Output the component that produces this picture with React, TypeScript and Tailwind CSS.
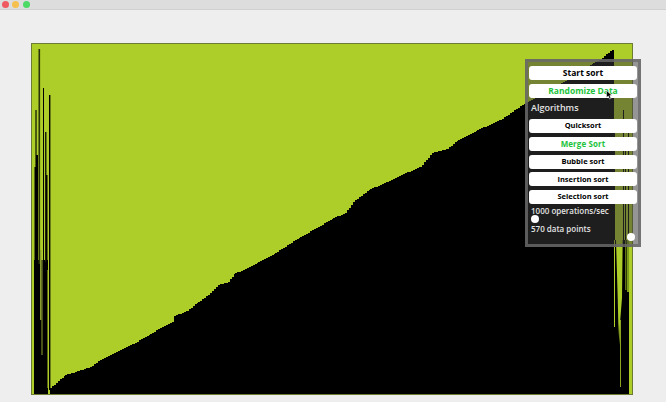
const profile = [
  [50, 388], [65, 375], [78, 371], [90, 367], [98, 361], [110, 355], [120, 350], [133, 344], [150, 334], [160, 328], [172, 322], [174, 316], [187, 311], [198, 302], [210, 293], [218, 285], [228, 282], [235, 273], [243, 270], [258, 262], [275, 253], [300, 237], [318, 227], [333, 218], [345, 213], [353, 202], [370, 189], [387, 182], [403, 174], [420, 167], [432, 153], [447, 149], [458, 140], [477, 130], [500, 120], [525, 103], [545, 92], [563, 82], [580, 71], [593, 63], [600, 60], [606, 54], [613, 49],
];

// the outline steps a little, as the sorted bars do
function stepped() {
  const pts: string[] = ['50,394'];
  for (let i = 0; i < profile.length - 1; i++) {
    const [x0, y0] = profile[i];
    const [x1, y1] = profile[i + 1];
    for (let x = x0; x < x1; x += 2) {
      const y = Math.round(y0 + ((y1 - y0) * (x - x0)) / (x1 - x0));
      const end = Math.min(x + 2, x1);
      pts.push(`${x},${y}`, `${end},${y}`);
    }
  }
  pts.push('614,49', '614,394');
  return pts.join(' ');
}

function Chart() {
  return (
    <svg viewBox="32 44 600 350" className="block w-full h-full" preserveAspectRatio="none">
      <rect x="32" y="44" width="600" height="350" fill="#adcd28" />
      <polygon points={stepped()} fill="#000" shapeRendering="crispEdges" />
      {/* left outliers */}
      <rect x="34" y="260" width="14" height="134" fill="#000" />
      <rect x="35" y="110" width="2" height="57" fill="#4a5a10" />
      <rect x="36" y="155" width="2" height="110" fill="#000" />
      <rect x="34.5" y="167" width="2.5" height="100" fill="#000" />
      <rect x="38.5" y="49" width="1.6" height="215" fill="#2b3308" />
      <rect x="43" y="88" width="1" height="180" fill="#000" />
      <rect x="45" y="132" width="1.5" height="130" fill="#1c2204" />
      <rect x="46" y="175" width="1.5" height="90" fill="#000" />
      <rect x="49" y="95" width="1.4" height="295" fill="#000" />
      <rect x="40" y="250" width="1.4" height="70" fill="#8a9c30" />
      <rect x="41.5" y="260" width="1" height="95" fill="#8fa530" />
      <rect x="47.5" y="270" width="1" height="118" fill="#adcd28" />
      {/* right outliers */}
      <rect x="614" y="240" width="15" height="154" fill="#000" />
      <rect x="623" y="110" width="1" height="130" fill="#000" />
      <rect x="625" y="140" width="1" height="100" fill="#000" />
      <rect x="628" y="120" width="1" height="120" fill="#000" />
      <rect x="614" y="120" width="1" height="120" fill="#000" />
      <polygon points="616,240 622.7,240 622,298 620,323 619.4,345 618.3,323 617.7,298" fill="#adcd28" />
      <rect x="614" y="240" width="1" height="87" fill="#adcd28" />
      <rect x="620.2" y="320" width="0.8" height="67" fill="#adcd28" />
      <rect x="625" y="240" width="1.5" height="50" fill="#5f7610" />
      <rect x="627" y="240" width="2" height="52" fill="#7c9a18" />
    </svg>
  );
}

function PanelButton({ label, active, large }: { label: string; active?: boolean; large?: boolean }) {
  return (
    <button
      className={`w-full h-[14px] rounded-[3px] bg-white leading-none ${large ? 'text-[8.5px] font-bold' : active ? 'text-[8px] tracking-[0.1px] font-bold' : 'text-[7.5px] font-bold'} ${active ? 'text-[#22c33c]' : 'text-black'}`}
    >
      {label}
    </button>
  );
}

export default function App() {
  return (
    <div className="w-[666px] h-[402px] overflow-hidden bg-[#eeeeef] relative font-['Open_Sans',sans-serif] flex flex-col">
      {/* Title bar */}
      <div className="h-[10px] shrink-0 bg-[#dddddd] border-b border-[#d0d0d0] flex items-center gap-[3.5px] pl-[1.5px]">
        <span className="w-[7px] h-[7px] rounded-full bg-[#ee5a5f]" />
        <span className="w-[7px] h-[7px] rounded-full bg-[#f5c04e]" />
        <span className="w-[7px] h-[7px] rounded-full bg-[#4cd964]" />
      </div>

      <div className="flex-1 pt-[33px] pl-[31px]">
        <div className="w-[602px] h-[352px] border border-[#6d7c33]">
          <Chart />
        </div>
      </div>

      {/* Floating controls */}
      <div className="absolute left-[525px] top-[59px] w-[116px] h-[188px] bg-[#3c3c3c]/50 border-[3px] border-[#6a6a6a]/80 px-[1px] pt-[4px] flex flex-col">
        <div className="flex flex-col gap-[4px]">
          <PanelButton label="Start sort" large />
          <PanelButton label="Randomize Data" active large />
        </div>
        <div className="h-[10px] flex items-center text-[9px] font-semibold text-[#e4e4e4] mt-[5px] mb-[6px] pl-[2px]">Algorithms</div>
        <div className="flex flex-col gap-[3.75px]">
          <PanelButton label="Quicksort" />
          <PanelButton label="Merge Sort" active />
          <PanelButton label="Bubble sort" />
          <PanelButton label="Insertion sort" />
          <PanelButton label="Selection sort" />
        </div>
        <div className="h-[10px] flex items-center text-[8px] font-semibold text-[#e4e4e4] mt-[2px] pl-[2px]">1000 operations/sec</div>
        <div className="h-[6px] flex items-center pl-[2px]">
          <span className="w-[8px] h-[8px] rounded-full bg-white" />
        </div>
        <div className="h-[10px] flex items-center text-[8px] font-semibold text-[#e4e4e4] mt-[2px] pl-[2px]">570 data points</div>
        <div className="h-[6px] flex items-center justify-end pr-[2px]">
          <span className="w-[8px] h-[8px] rounded-full bg-white" />
        </div>
      </div>

      {/* Pointer */}
      <svg className="absolute left-[606px] top-[90px]" width="7" height="10" viewBox="0 0 7 10">
        <path d="M0.5 0.5 L0.5 7.5 L2.3 6 L3.6 9 L5 8.4 L3.8 5.6 L6 5.5 Z" fill="#000" stroke="#fff" strokeWidth="0.5" />
      </svg>
    </div>
  );
}
